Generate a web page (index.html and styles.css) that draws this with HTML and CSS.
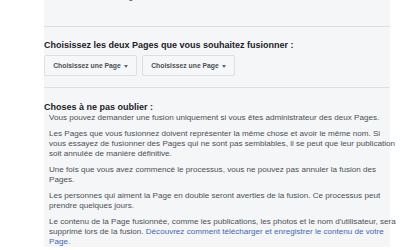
FILE: index.html
```html
<!DOCTYPE html>
<html lang="fr">
  <head>
    <meta charset="UTF-8" />
    <title>Fusionner des Pages</title>
    <link rel="stylesheet" href="styles.css">
  </head>
  <body>
    <div class="panel">
      <div class="section intro">
        <p>Lancer la fusion des Pages en double.</p>
      </div>
      <div class="section choose">
        <h2>Choisissez les deux Pages que vous souhaitez fusionner :</h2>
        <div class="selects">
          <button class="select">Choisissez une Page</button>
          <button class="select">Choisissez une Page</button>
        </div>
      </div>
      <div class="section notes">
        <h2>Choses à ne pas oublier :</h2>
        <p>Vous pouvez demander une fusion uniquement si vous êtes administrateur des deux Pages.</p>
        <p>Les Pages que vous fusionnez doivent représenter la même chose et avoir le même nom. Si<br>vous essayez de fusionner des Pages qui ne sont pas semblables, il se peut que leur publication<br>soit annulée de manière définitive.</p>
        <p>Une fois que vous avez commencé le processus, vous ne pouvez pas annuler la fusion des<br>Pages.</p>
        <p>Les personnes qui aiment la Page en double seront averties de la fusion. Ce processus peut<br>prendre quelques jours.</p>
        <p>Le contenu de la Page fusionnée, comme les publications, les photos et le nom d'utilisateur, sera<br>supprimé lors de la fusion. <a href="#">Découvrez comment télécharger et enregistrer le contenu de votre<br>Page.</a></p>
      </div>
    </div>
  </body>
</html>
```

FILE: styles.css
```css
body {
  margin: 0;
  background-color: #fff;
  font-family: "Liberation Sans", Arial, sans-serif;
  color: #4b4f56;
  overflow: hidden;
}
.panel {
  margin: -8px 0 0 44px;
  width: 346px;
  background-color: #f5f6f7;
}
.section {
  border-bottom: 1px solid #dddfe2;
}
.section:last-child {
  border-bottom: none;
}
.intro {
  padding-bottom: 24px;
}
.intro p,
.notes p {
  font-size: 8.1px;
  line-height: 10px;
}
.intro p {
  margin: 0;
}
h2 {
  margin: 0;
  color: #1d2129;
  font-size: 9px;
  font-weight: bold;
  line-height: 12px;
}
.choose {
  padding: 12px 0 11px;
}
.selects {
  display: flex;
  gap: 5px;
  margin-top: 4px;
}
.select {
  display: flex;
  align-items: center;
  justify-content: center;
  gap: 3px;
  width: 93px;
  height: 21px;
  padding: 0;
  background-color: #f6f7f9;
  border: 1px solid #dddfe2;
  border-radius: 2px;
  color: #4b4f56;
  font-family: inherit;
  font-size: 6.8px;
  font-weight: bold;
}
.select::after {
  content: "";
  border-left: 2.5px solid transparent;
  border-right: 2.5px solid transparent;
  border-top: 3px solid #606770;
  margin-top: 1px;
}
.notes {
  padding-top: 13px;
}
.notes p {
  margin: 0 0 6px 5px;
  width: 355px;
}
.notes a {
  color: #4267b2;
  text-decoration: none;
}
```
